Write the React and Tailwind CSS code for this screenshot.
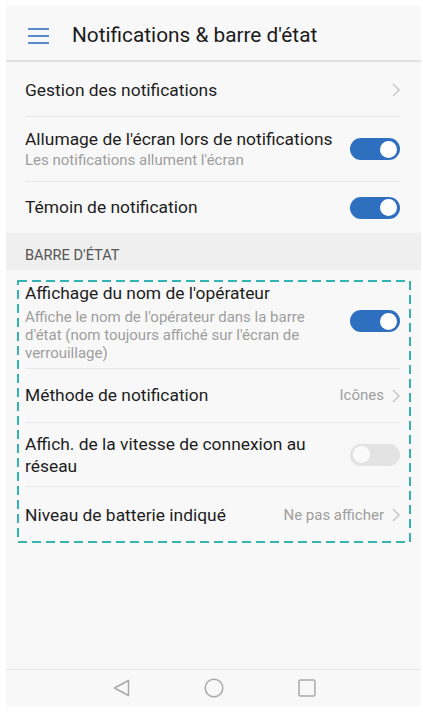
import React from "react";

const font = { fontFamily: "Roboto, 'Noto Sans', sans-serif" };

function Chevron() {
  return (
    <svg width="8" height="14" viewBox="0 0 8 14" className="shrink-0">
      <polyline points="1,1 7,7 1,13" fill="none" stroke="#c4c4c4" strokeWidth="1.4" />
    </svg>
  );
}

function Toggle({ on }) {
  return on ? (
    <div className="w-[50px] h-[22px] rounded-full bg-[#2f6fc0] flex items-center justify-end pr-[3px] shrink-0">
      <div className="w-[17px] h-[17px] rounded-full bg-white" />
    </div>
  ) : (
    <div className="w-[50px] h-[22px] rounded-full bg-[#e3e3e3] flex items-center justify-start pl-[3px] shrink-0">
      <div className="w-[17px] h-[17px] rounded-full bg-[#fafafa]" />
    </div>
  );
}

function Divider() {
  return <div className="h-px bg-[#e8e8e8]" />;
}

export default function App() {
  return (
    <div className="w-[423px] h-[712px] bg-white pt-[6px] pb-[6px] pl-[6px] pr-[2px]" style={font}>
      <div className="h-full bg-[#f8f8f8] flex flex-col">
        {/* header */}
        <div className="h-[54px] flex items-center pl-[22px] gap-[23px] pt-[5px]">
          <svg width="21" height="16" viewBox="0 0 21 16">
            <rect x="0" y="0" width="21" height="2" fill="#5a8ad0" />
            <rect x="0" y="7" width="21" height="2" fill="#5a8ad0" />
            <rect x="0" y="14" width="21" height="2" fill="#5a8ad0" />
          </svg>
          <span className="text-[20.8px] text-[#1b1b1b] leading-none">Notifications &amp; barre d'état</span>
        </div>
        <div className="h-[2px] bg-[#e2e2e2]" />

        <div className="pl-[19px] pr-[21px]">
          <div className="h-[54px] flex items-center justify-between pt-[2px]">
            <span className="text-[17.4px] text-[#1d1d1d]">Gestion des notifications</span>
            <Chevron />
          </div>
          <Divider />
          <div className="h-[64px] flex items-center justify-between">
            <div className="flex flex-col">
              <span className="text-[17.4px] text-[#1d1d1d] leading-[22px]">Allumage de l'écran lors de notifications</span>
              <span className="text-[15px] text-[#9e9e9e] leading-[21px]">Les notifications allument l'écran</span>
            </div>
            <Toggle on />
          </div>
          <Divider />
          <div className="h-[51px] flex items-center justify-between">
            <span className="text-[17.4px] text-[#1d1d1d]">Témoin de notification</span>
            <Toggle on />
          </div>
        </div>

        {/* section header */}
        <div className="h-[37px] bg-[#efefef] flex items-end pl-[19px] pb-[5px]">
          <span className="text-[14.6px] text-[#555] leading-[20px]">BARRE D'ÉTAT</span>
        </div>

        {/* annotated group */}
        <div className="relative mt-[10px] ml-[11px] mr-[9px] h-[263px] pl-[8px] pr-[12px]">
          <svg className="absolute inset-0 w-full h-full overflow-visible pointer-events-none">
            <rect x="1" y="1" width="392" height="261" fill="none" stroke="#33b3b1" strokeWidth="2" strokeDasharray="9 5" />
          </svg>
          <div className="h-[88px] flex items-center justify-between pb-[6px]">
            <div className="flex flex-col self-start">
              <span className="text-[17.4px] text-[#1d1d1d] leading-[22px] mt-[2px]">Affichage du nom de l'opérateur</span>
              <span className="text-[15px] text-[#9e9e9e] leading-[18px] mt-[4px] w-[300px]">
                Affiche le nom de l'opérateur dans la barre d'état (nom toujours affiché sur l'écran de verrouillage)
              </span>
            </div>
            <Toggle on />
          </div>
          <Divider />
          <div className="h-[53px] flex items-center justify-between">
            <span className="text-[17.4px] text-[#1d1d1d]">Méthode de notification</span>
            <div className="flex items-center gap-[8px]">
              <span className="text-[15px] text-[#9e9e9e]">Icônes</span>
              <Chevron />
            </div>
          </div>
          <Divider />
          <div className="h-[63px] flex items-center justify-between">
            <span className="text-[17.4px] text-[#1d1d1d] leading-[22px] w-[300px]">Affich. de la vitesse de connexion au réseau</span>
            <Toggle />
          </div>
          <Divider />
          <div className="h-[56px] flex items-center justify-between">
            <span className="text-[17.4px] text-[#1d1d1d]">Niveau de batterie indiqué</span>
            <div className="flex items-center gap-[8px]">
              <span className="text-[15px] text-[#9e9e9e]">Ne pas afficher</span>
              <Chevron />
            </div>
          </div>
        </div>

        <div className="flex-1" />

        {/* nav bar */}
        <div className="h-px bg-[#e8e8e8]" />
        <div className="h-[36px] flex items-center justify-center gap-[74px] pl-[2px]">
          <svg width="17" height="18" viewBox="0 0 17 18">
            <polygon points="15.5,1.5 15.5,16.5 1.5,9" fill="none" stroke="#a9a9a9" strokeWidth="1.5" strokeLinejoin="round" />
          </svg>
          <svg width="20" height="20" viewBox="0 0 20 20">
            <circle cx="10" cy="10" r="8.8" fill="none" stroke="#a9a9a9" strokeWidth="1.5" />
          </svg>
          <svg width="18" height="18" viewBox="0 0 18 18">
            <rect x="1" y="1" width="16" height="16" rx="1.5" fill="none" stroke="#a9a9a9" strokeWidth="1.5" />
          </svg>
        </div>
      </div>
    </div>
  );
}
